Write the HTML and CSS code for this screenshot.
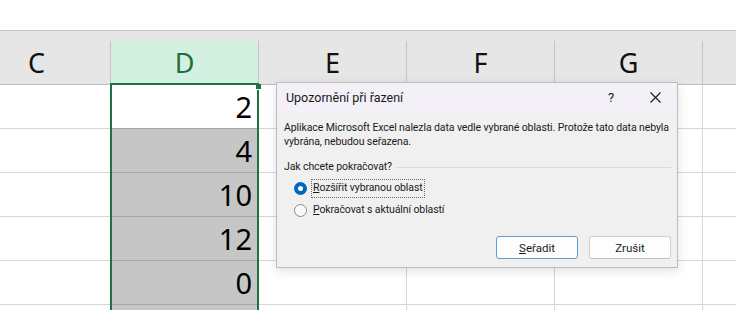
FILE: index.html
```html
<!doctype html>
<html>
  <head>
    <meta charset="utf-8">
    <link rel="stylesheet" href="styles.css">
  </head>

  <body>
    <main class="sheet">
      <div class="ribbon"></div>

      <div class="grid">
        <div class="colhead">
          <div class="hcell"><span class="hlabel">C</span></div>
          <div class="hcell"><span class="hlabel active">D</span></div>
          <div class="hcell"><span class="hlabel">E</span></div>
          <div class="hcell"><span class="hlabel">F</span></div>
          <div class="hcell"><span class="hlabel">G</span></div>
          <div class="hcell"><span class="hlabel"></span></div>
        </div>

        <div class="row">
          <div class="cell"></div>
          <div class="cell num">2</div>
          <div class="cell"></div><div class="cell"></div><div class="cell"></div><div class="cell"></div>
        </div>
        <div class="row">
          <div class="cell"></div>
          <div class="cell num picked">4</div>
          <div class="cell"></div><div class="cell"></div><div class="cell"></div><div class="cell"></div>
        </div>
        <div class="row">
          <div class="cell"></div>
          <div class="cell num picked">10</div>
          <div class="cell"></div><div class="cell"></div><div class="cell"></div><div class="cell"></div>
        </div>
        <div class="row">
          <div class="cell"></div>
          <div class="cell num picked">12</div>
          <div class="cell"></div><div class="cell"></div><div class="cell"></div><div class="cell"></div>
        </div>
        <div class="row">
          <div class="cell"></div>
          <div class="cell num picked">0</div>
          <div class="cell"></div><div class="cell"></div><div class="cell"></div><div class="cell"></div>
        </div>
        <div class="row">
          <div class="cell"></div>
          <div class="cell num picked"></div>
          <div class="cell"></div><div class="cell"></div><div class="cell"></div><div class="cell"></div>
        </div>
      </div>

      <!-- green selection outline over column D -->
      <div class="selection"><span class="handle"></span></div>

      <section class="dialog">
        <header class="titlebar">
          <span class="title">Upozornění při řazení</span>
          <span class="tbtn">?</span>
          <span class="tbtn">
            <svg width="11" height="11" viewBox="0 0 11 11">
              <path d="M0.5 0.5 L10.5 10.5 M10.5 0.5 L0.5 10.5" stroke="#1a1a1a" stroke-width="1.1" fill="none"/>
            </svg>
          </span>
        </header>

        <div class="dbody">
          <p class="msg">Aplikace Microsoft Excel nalezla data vedle vybrané oblasti. Protože tato data nebyla<br>vybrána, nebudou seřazena.</p>

          <div class="group">
            <span>Jak chcete pokračovat?</span>
            <span class="rule"></span>
          </div>

          <label class="option">
            <span class="radio checked"></span>
            <span class="focus"><u>R</u>ozšířit vybranou oblast</span>
          </label>
          <label class="option">
            <span class="radio"></span>
            <span class="plain"><u>P</u>okračovat s aktuální oblastí</span>
          </label>

          <div class="buttons">
            <button class="btn default"><u>S</u>eřadit</button>
            <button class="btn">Zrušit</button>
          </div>
        </div>
      </section>
    </main>
  </body>
</html>
```

FILE: styles.css
```css
* {
  box-sizing: border-box;
  margin: 0;
  padding: 0;
}

body {
  width: 736px;
  height: 310px;
  overflow: hidden;
  background: #fff;
  font-family: "Noto Sans", "DejaVu Sans", sans-serif;
  color: #1a1a1a;
}

.sheet {
  position: relative;
  height: 310px;
  overflow: hidden;
}

.ribbon {
  height: 30px;
  background: #fff;
}

.grid {
  margin-left: -37px;
}

/* column headers */
.colhead {
  display: flex;
  height: 55px;
  background: #e6e6e6;
  border-top: 1px solid #c6c6c6;
  border-bottom: 1px solid #bdbdbd;
}

.hcell {
  flex: 0 0 148px;
  padding-top: 10px;
}

.hlabel {
  display: block;
  height: 43px;
  padding-top: 8px;
  border-right: 1px solid #c4c4c4;
  text-align: center;
  font-size: 27px;
  line-height: 27px;
  color: #111;
}

.hlabel.active {
  background: #d3f0e0;
  color: #1e6e42;
}

/* cells */
.row {
  display: flex;
  height: 44px;
}

.cell {
  flex: 0 0 148px;
  border-right: 1px solid #d6d6d6;
  border-bottom: 1px solid #d6d6d6;
}

.num {
  padding: 7px 6px 0 0;
  text-align: right;
  font-size: 29px;
  line-height: 29px;
  color: #000;
  border-bottom-color: #a9a9a9;
}

.picked {
  background: #c6c6c6;
}

.selection {
  position: absolute;
  left: 110px;
  top: 83px;
  width: 149px;
  height: 240px;
  border: 2px solid #1f7145;
}

.handle {
  position: absolute;
  right: -4px;
  top: -1px;
  width: 5px;
  height: 5px;
  background: #1f7145;
  box-shadow: 0 1px 0 #fff;
}

/* sort warning dialog */
.dialog {
  position: absolute;
  left: 276px;
  top: 82px;
  width: 402px;
  height: 186px;
  background: #f0f0f0;
  border: 1px solid #bdbdbd;
  box-shadow: 0 3px 10px rgba(0, 0, 0, 0.12);
  font-family: Roboto, "Noto Sans", sans-serif;
}

.titlebar {
  display: flex;
  align-items: center;
  height: 29px;
  padding-left: 9px;
  background: #f3f0f7;
}

.title {
  flex: 1;
  font-size: 12.5px;
}

.tbtn {
  width: 44px;
  display: flex;
  justify-content: center;
  font-size: 13px;
}

.dbody {
  padding: 9px 6px 0 7px;
  font-size: 10.5px;
  letter-spacing: -0.1px;
  line-height: 14px;
}

.msg {
  white-space: nowrap;
}

.group {
  display: flex;
  align-items: center;
  margin-top: 11px;
}

.rule {
  flex: 1;
  margin-left: 4px;
  border-top: 1px solid #dadada;
}

.option {
  display: flex;
  align-items: center;
  height: 22px;
  padding-left: 10px;
}

.option:first-of-type {
  margin-top: 3px;
}

.radio {
  width: 13px;
  height: 13px;
  margin-right: 4px;
  border-radius: 50%;
  border: 1px solid #8a8a8a;
  background: #fafafa;
}

.radio.checked {
  border: 4px solid #0067c0;
  background: #fff;
}

.focus {
  padding: 1px 1px 2px;
  border: 1px dotted #6a6a6a;
}

.plain {
  padding: 1px 2px 2px;
}

.buttons {
  display: flex;
  justify-content: flex-end;
  gap: 11px;
  margin-top: 15px;
}

.btn {
  width: 82px;
  height: 23px;
  font-family: inherit;
  font-size: 11.5px;
  letter-spacing: 0;
  color: #1a1a1a;
  background: #fdfdfd;
  border: 1px solid #d0d0d0;
  border-bottom-color: #c2c2c2;
  border-radius: 3px;
}

.btn.default {
  border-color: #5f9fd8;
}
```
